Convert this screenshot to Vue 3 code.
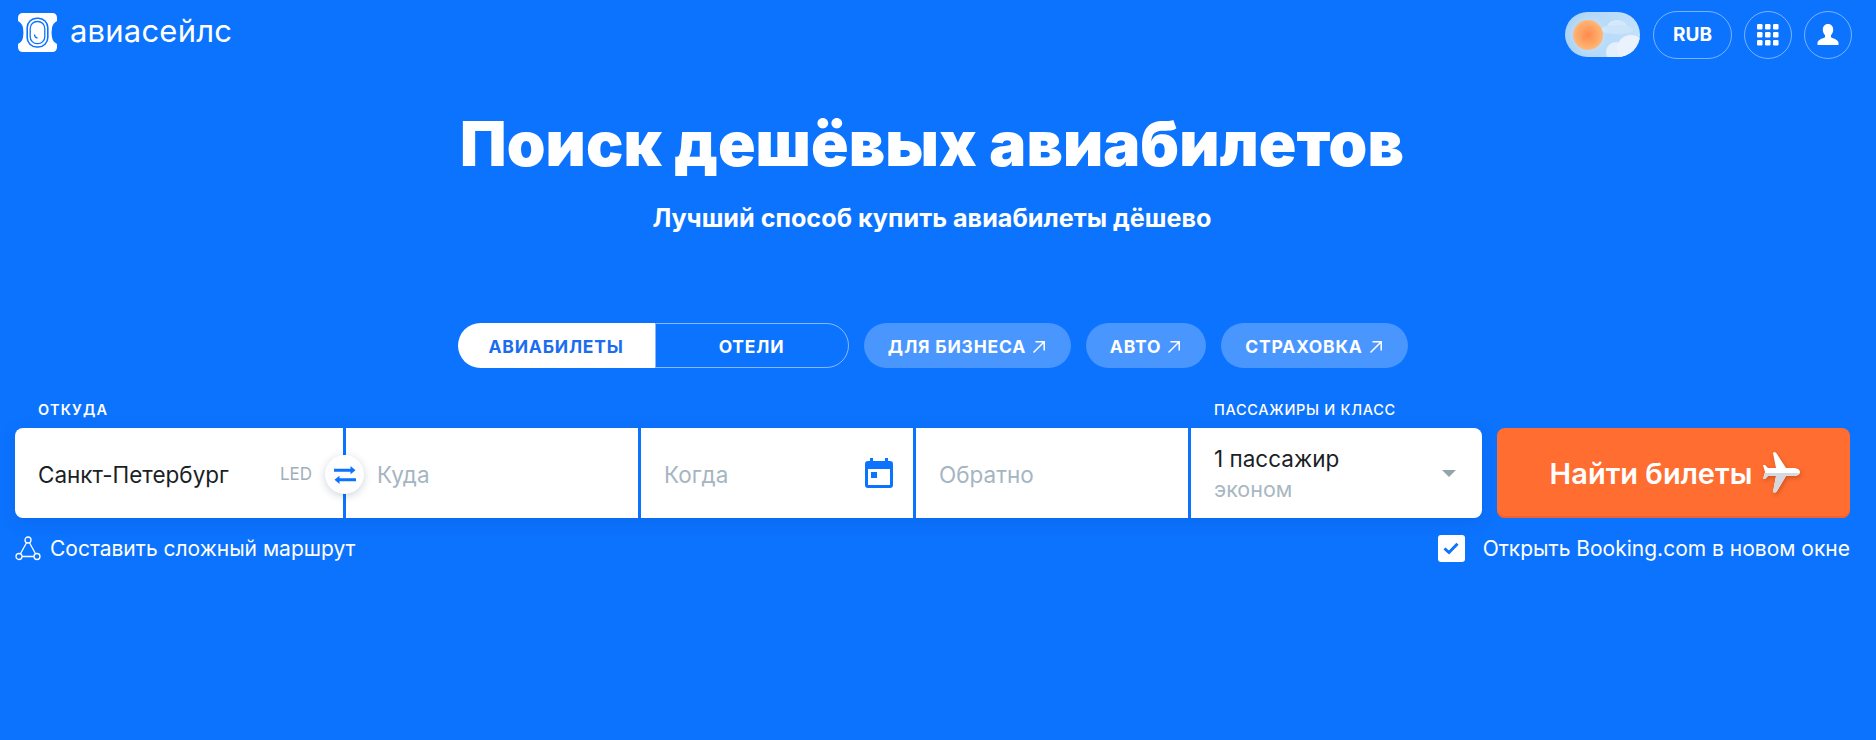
<script setup>
const pills = [
  { label: 'ДЛЯ БИЗНЕСА', w: 207 },
  { label: 'АВТО', w: 120 },
  { label: 'СТРАХОВКА', w: 187 },
]
</script>

<template>
  <div class="page">
    <header class="top">
      <div class="brand">
        <svg class="logo" width="39" height="39" viewBox="0 0 39 39">
          <path fill="#fff" d="M5 0H34Q39 0 39 5V8Q35 10 34 14.500Q33.200 19.500 34 24.500Q35 29 39 31V34Q39 39 34 39H5Q0 39 0 34V31Q4 29 5 24.500Q5.800 19.500 5 14.500Q4 10 0 8V5Q0 0 5 0Z"/>
          <rect x="9.200" y="5.200" width="20.600" height="28.800" rx="9.500" fill="none" stroke="#0c73fe" stroke-width="1.600"/>
          <rect x="12.200" y="8.500" width="14.600" height="22.200" rx="7" fill="none" stroke="#0c73fe" stroke-width="1.300"/>
          <path d="M16.500 21.500Q16.500 24.500 19.500 25" fill="none" stroke="#0c73fe" stroke-width="1.300"/>
        </svg>
        <span class="brand-name">авиасейлс</span>
      </div>
      <div class="top-actions">
        <div class="theme">
          <span class="cloud-a"></span>
          <span class="cloud-a2"></span>
          <span class="cloud-b"></span>
          <span class="cloud-b2"></span>
          <span class="sun"></span>
        </div>
        <button class="round rub">RUB</button>
        <button class="round circle">
          <svg width="22" height="22" viewBox="0 0 22 22" fill="#fff">
            <rect v-for="c in 9" :key="c" :x="((c - 1) % 3) * 8" :y="Math.floor((c - 1) / 3) * 8" width="5.500" height="5.500" rx="1.200"/>
          </svg>
        </button>
        <button class="round circle">
          <svg width="22" height="22" viewBox="0 0 22 22" fill="#fff">
            <path d="M11 0C7.600 0 5.800 2.500 5.800 5.600C5.800 8 6.700 10 8 11.200V13.200C6 14.500 1.500 15 .5 18.500V21H21.500V18.500C20.500 15 16 14.500 14 13.200V11.200C15.300 10 16.200 8 16.200 5.600C16.200 2.500 14.400 0 11 0Z"/>
          </svg>
        </button>
      </div>
    </header>

    <section class="hero">
      <h1>Поиск дешёвых авиабилетов</h1>
      <p>Лучший способ купить авиабилеты дёшево</p>
    </section>

    <nav class="tabs">
      <div class="segment">
        <span class="seg active">АВИАБИЛЕТЫ</span>
        <span class="seg hotel">ОТЕЛИ</span>
      </div>
      <a v-for="p in pills" :key="p.label" class="pill" :style="{ width: p.w + 'px' }">
        {{ p.label }}
        <svg width="14" height="14" viewBox="0 0 14 14" fill="none" stroke="#fff" stroke-width="1.500">
          <path d="M1.500 12.500L12 2M3.500 1.800H12.200V10.500"/>
        </svg>
      </a>
    </nav>

    <div class="labels">
      <span>ОТКУДА</span>
      <span class="pax-label">ПАССАЖИРЫ И КЛАСС</span>
    </div>

    <div class="search">
      <div class="form">
        <div class="field origin">
          <span class="value">Санкт-Петербург</span>
          <span class="iata">LED</span>
          <span class="swap">
            <svg width="22" height="20" viewBox="0 0 22 20" fill="#0c73fe">
              <path d="M0 3.700H16.500V1L21.500 5.200L16.500 9.200V6.700H0Z"/>
              <path d="M22 13.200H5.500V10.700L.5 14.700L5.500 19V16.200H22Z"/>
            </svg>
          </span>
        </div>
        <div class="field dest"><span class="ph">Куда</span></div>
        <div class="field date">
          <span class="ph">Когда</span>
          <svg width="28" height="30" viewBox="0 0 28 30" fill="#0c73fe">
            <path fill-rule="evenodd" d="M5 0H8V3H20V0H23V3H25Q28 3 28 6V27Q28 30 25 30H3Q0 30 0 27V6Q0 3 3 3H5ZM3 11V27H25V11Z"/>
            <rect x="6" y="14" width="6" height="6"/>
          </svg>
        </div>
        <div class="field ret"><span class="ph">Обратно</span></div>
        <div class="field pax">
          <div class="pax-text">
            <span class="value">1 пассажир</span>
            <span class="cls">эконом</span>
          </div>
          <span class="caret"></span>
        </div>
      </div>
      <button class="find">
        Найти билеты
        <svg width="38" height="42" viewBox="0 0 38 42">
          <path fill="#fff" d="M12 0Q14 0 15 2L24 16H33Q38 17 38 20Q38 23 33 24H24L15 39Q14 41 12 40.500L11 40L14 24H6L3 27H1L3 20L1 13H3L6 16H14L11 1Z"/>
          <path fill="#d5d9df" d="M3.300 21H37.200Q36 23.500 33 24H24L15 39Q14 41 12 40.500L11 40L14 24H6L3 27H1Z"/>
        </svg>
      </button>
    </div>

    <div class="options">
      <div class="route">
        <svg width="26" height="25" viewBox="0 0 26 25" fill="none" stroke="#fff" stroke-width="1.300">
          <circle cx="13" cy="4" r="3"/>
          <circle cx="4" cy="20.500" r="3"/>
          <circle cx="22" cy="20.500" r="3"/>
          <path d="M11.500 6.700L5.500 17.800M14.500 6.700L20.500 17.800M7 20.500H19"/>
        </svg>
        <span>Составить сложный маршрут</span>
      </div>
      <div class="booking">
        <span class="check">
          <svg width="16" height="13" viewBox="0 0 16 13" fill="none" stroke="#0c73fe" stroke-width="3">
            <path d="M1.500 6.500L6 10.500L14.500 1.800"/>
          </svg>
        </span>
        <span>Открыть Booking.com в новом окне</span>
      </div>
    </div>
  </div>
</template>

<style scoped>
.page {
  height: 740px;
  background: #0c73fe;
  color: #fff;
  font-family: Inter, "Noto Sans", sans-serif;
  overflow: hidden;
  box-sizing: border-box;
}
.top {
  display: flex;
  justify-content: space-between;
  align-items: center;
  height: 68px;
  padding: 0 24px 0 18px;
}
.brand { display: flex; align-items: center; gap: 13px; margin-top: -4px; }
.brand-name { font-size: 31px; line-height: 36px; letter-spacing: 0.2px; margin-top: -2px; }
.top-actions { display: flex; align-items: center; gap: 12px; margin-top: 1px; }
.theme {
  position: relative;
  width: 75px;
  height: 45px;
  margin-right: 1px;
  border-radius: 23px;
  background: linear-gradient(90deg, #a9d3f6, #c4e1fb);
  overflow: hidden;
}
.sun {
  position: absolute;
  left: 8px;
  top: 8px;
  width: 30px;
  height: 30px;
  border-radius: 50%;
  background: radial-gradient(circle, #ff8a4c 0%, #ffad6c 55%, #ffcb92 100%);
  box-shadow: 0 0 8px rgba(255, 255, 255, .35);
}
.cloud-a, .cloud-a2, .cloud-b, .cloud-b2 { position: absolute; border-radius: 50%; }
.cloud-a { left: 42px; top: 8px; width: 20px; height: 14px; background: #d4e9fb; }
.cloud-a2 { left: 36px; top: 13px; width: 32px; height: 9px; background: #cce4fa; }
.cloud-b { left: 41px; top: 30px; width: 20px; height: 20px; background: #e2effc; }
.cloud-b2 { left: 52px; top: 23px; width: 28px; height: 28px; background: #eaf3fd; }
.round {
  height: 48px;
  box-sizing: border-box;
  border: 1.500px solid rgba(255, 255, 255, .45);
  border-radius: 24px;
  background: none;
  color: #fff;
  font: 700 19px Inter, sans-serif;
  display: flex;
  align-items: center;
  justify-content: center;
  padding: 0;
}
.rub { width: 79px; }
.circle { width: 48px; }
.hero { text-align: center; padding-right: 12px; }
.hero h1 {
  margin: 40px 0 0;
  font-size: 62px;
  line-height: 72px;
  font-weight: 900;
  letter-spacing: 0.1px;
}
.hero p {
  margin: 23px 0 0;
  font-size: 25.200px;
  line-height: 30px;
  font-weight: 700;
}
.tabs {
  display: flex;
  justify-content: center;
  gap: 15px;
  margin-top: 90px;
  padding-right: 11px;
  height: 45px;
}
.segment { display: flex; width: 391px; }
.seg {
  display: flex;
  align-items: center;
  justify-content: center;
  padding-top: 2px;
  box-sizing: border-box;
  font-size: 17.500px;
  font-weight: 700;
  letter-spacing: 0.8px;
}
.active {
  width: 197px;
  background: #fff;
  color: #1a6cf0;
  border-radius: 23px 0 0 23px;
}
.hotel {
  flex: 1;
  border: 1px solid rgba(255, 255, 255, .5);
  border-radius: 0 23px 23px 0;
}
.pill {
  display: flex;
  align-items: center;
  justify-content: center;
  gap: 6px;
  padding-top: 2px;
  box-sizing: border-box;
  background: #4a96ff;
  border-radius: 23px;
  font-size: 17.500px;
  font-weight: 700;
  letter-spacing: 0.8px;
}
.labels {
  display: flex;
  margin-top: 32px;
  padding-left: 38px;
  height: 20px;
  font-size: 14.500px;
  line-height: 20px;
  font-weight: 500;
  letter-spacing: 1.200px;
}
.labels span:first-child { font-weight: 600; width: 1176px; }
.pax-label { letter-spacing: 0.700px; }
.search {
  display: flex;
  gap: 15px;
  margin: 8px 26px 0 15px;
  height: 90px;
}
.form {
  display: flex;
  width: 1467px;
  gap: 3px;
  border-radius: 8px;
  box-shadow: 0 4px 16px rgba(0, 60, 160, .18);
}
.field {
  position: relative;
  display: flex;
  align-items: center;
  background: #fff;
  box-sizing: border-box;
  font-size: 22.500px;
}
.origin { width: 328px; padding-left: 23px; border-radius: 8px 0 0 8px; }
.dest { width: 292px; padding-left: 31px; }
.date { width: 272px; padding: 0 20px 0 23px; justify-content: space-between; }
.ret { width: 272px; padding-left: 23px; }
.pax { width: 291px; padding: 0 26px 0 23px; justify-content: space-between; border-radius: 0 8px 8px 0; }
.value { color: #1b1f26; }
.ph { color: #a6b5c2; }
.origin .value, .ph { padding-top: 2px; }
.iata {
  position: absolute;
  left: 265px;
  top: 36px;
  font-size: 17px;
  color: #a0afbc;
}
.swap {
  position: absolute;
  right: -21px;
  top: 27px;
  width: 39px;
  height: 39px;
  z-index: 1;
  border-radius: 50%;
  background: #fff;
  box-shadow: 0 2px 8px rgba(0, 40, 90, .2);
  display: flex;
  align-items: center;
  justify-content: center;
}
.pax-text { display: flex; flex-direction: column; gap: 4px; line-height: 26px; margin-top: 1px; }
.cls { color: #a9b7c2; font-size: 21.500px; }
.caret {
  border-left: 7.500px solid transparent;
  border-right: 7.500px solid transparent;
  border-top: 7.500px solid #93a4ae;
}
.find {
  flex: 1;
  border: none;
  border-radius: 8px;
  background: #ff6d31;
  box-shadow: inset 0 -2px 0 #f4612a;
  color: #fff;
  font: 600 29px Inter, sans-serif;
  display: flex;
  align-items: center;
  justify-content: center;
  gap: 10px;
  padding: 0 0 0 3px;
}
.find svg { filter: drop-shadow(1px 2px 2px rgba(120, 40, 0, .35)); }
.options {
  display: flex;
  justify-content: space-between;
  align-items: center;
  margin: 16px 26px 0 15px;
  height: 28px;
  font-size: 21px;
}
.route { display: flex; align-items: center; gap: 9px; }
.booking { display: flex; align-items: center; gap: 18px; }
.check {
  width: 27px;
  height: 27px;
  border-radius: 3px;
  background: #fff;
  display: flex;
  align-items: center;
  justify-content: center;
}
</style>
